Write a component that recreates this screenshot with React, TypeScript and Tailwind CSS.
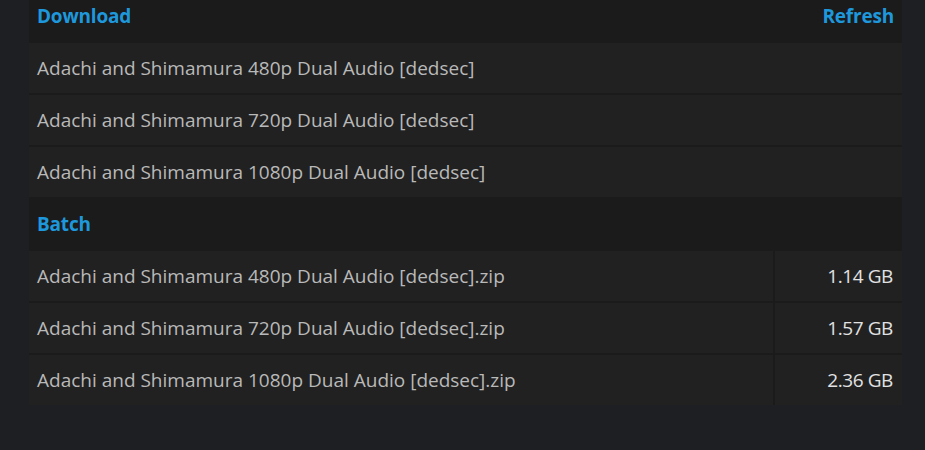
import React from "react";

const downloads = [
  "Adachi and Shimamura 480p Dual Audio [dedsec]",
  "Adachi and Shimamura 720p Dual Audio [dedsec]",
  "Adachi and Shimamura 1080p Dual Audio [dedsec]",
];

const batch = [
  ["Adachi and Shimamura 480p Dual Audio [dedsec].zip", "1.14 GB"],
  ["Adachi and Shimamura 720p Dual Audio [dedsec].zip", "1.57 GB"],
  ["Adachi and Shimamura 1080p Dual Audio [dedsec].zip", "2.36 GB"],
];

export default function App() {
  return (
    <div
      className="w-[925px] h-[450px] bg-[#1e1f22] pl-[29px] overflow-hidden"
      style={{ fontFamily: '"Open Sans", "Noto Sans", sans-serif' }}
    >
      <div className="w-[873px] bg-[#1b1b1b] flex flex-col gap-[2px]">
        <div className="h-[41px] flex items-center justify-between px-[8px] pb-[8px]">
          <span className="text-[19px] font-bold text-[#1e98dc] tracking-[-0.2px]">Download</span>
          <span className="text-[19px] font-bold text-[#1e98dc] tracking-[-0.2px]">Refresh</span>
        </div>
        {downloads.map((d) => (
          <div key={d} className="h-[50px] bg-[#212121] flex items-center px-[8px]">
            <span className="text-[19px] text-[#b9b9b9]">{d}</span>
          </div>
        ))}
        <div className="h-[50px] flex items-center px-[8px]">
          <span className="text-[19px] font-bold text-[#1e98dc] tracking-[-0.2px]">Batch</span>
        </div>
        {batch.map(([n, s]) => (
          <div key={n} className="h-[50px] flex gap-[2px]">
            <div className="flex-1 bg-[#212121] flex items-center px-[8px]">
              <span className="text-[19px] text-[#b9b9b9]">{n}</span>
            </div>
            <div className="w-[127px] bg-[#212121] flex items-center justify-end px-[9px]">
              <span className="text-[19px] text-[#e2e2e2] tracking-[-0.4px]">{s}</span>
            </div>
          </div>
        ))}
      </div>
    </div>
  );
}
